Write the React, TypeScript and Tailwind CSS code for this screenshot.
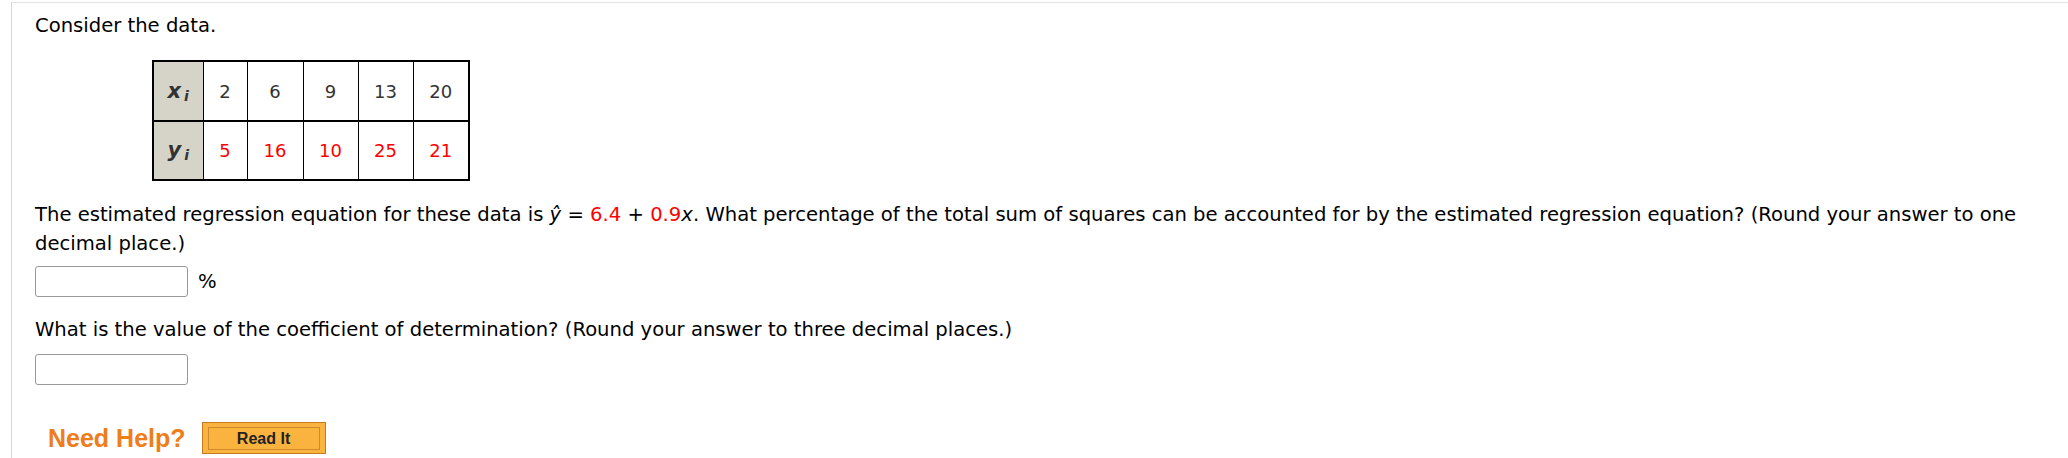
import React from "react";

const xs = [2, 6, 9, 13, 20];
const ys = [5, 16, 10, 25, 21];
const colW = ["w-[44px]", "w-[56px]", "w-[55px]", "w-[55px]", "w-[56px]"];

function AnswerBox() {
  return (
    <div className="w-[153px] h-[31px] border border-[#999] rounded-[3px] bg-white" />
  );
}

export default function App() {
  return (
    <div className="w-[2068px] h-[458px] bg-white overflow-hidden font-['DejaVu_Sans',sans-serif] text-[19.6px] leading-[29px] text-black">
      <div className="mt-[2px] border-t border-[#e3e3e3] ml-[11px] h-[456px] border-l border-l-[#d6d6d6] pl-[23px] pt-[8px]">
        <p>Consider the data.</p>

        <table className="ml-[117px] mt-[20px] border-collapse border-2 border-black text-[18px] text-center">
          <tbody>
            <tr className="h-[60px] border-b-2 border-black">
              <th className="w-[50px] bg-[#d6d3c9] border-r border-black italic font-bold text-[#333] text-[21px]">
                x<sub className="text-[14px] ml-[3px] relative top-[3px]">i</sub>
              </th>
              {xs.map((v, i) => (
                <td key={i} className={`${colW[i]} border-r border-black text-[#333]`}>
                  {v}
                </td>
              ))}
            </tr>
            <tr className="h-[59px]">
              <th className="bg-[#d6d3c9] border-r border-black italic font-bold text-[#333] text-[21px]">
                y<sub className="text-[14px] ml-[3px] relative top-[3px]">i</sub>
              </th>
              {ys.map((v, i) => (
                <td key={i} className="border-r border-black text-[#ff0000]">
                  {v}
                </td>
              ))}
            </tr>
          </tbody>
        </table>

        <p className="mt-[19px] w-[2010px]">
          The estimated regression equation for these data is{" "}
          <span className="italic">ŷ</span> = <span className="text-[#ff0000]">6.4</span> +{" "}
          <span className="text-[#ff0000]">0.9</span>
          <span className="italic">x</span>. What percentage of the total sum of squares can be
          accounted for by the estimated regression equation? (Round your answer to one decimal
          place.)
        </p>

        <div className="mt-[8px] flex items-center gap-[10px]">
          <AnswerBox />
          <span>%</span>
        </div>

        <p className="mt-[18px]">
          What is the value of the coefficient of determination? (Round your answer to three
          decimal places.)
        </p>

        <div className="mt-[10px]">
          <AnswerBox />
        </div>

        <div className="mt-[37px] ml-[13px] flex items-center gap-[16px]">
          <span className="font-['Liberation_Sans',Arial,sans-serif] font-bold text-[25px] text-[#ee7d1a] leading-none">
            Need Help?
          </span>
          <button className="w-[124px] h-[32px] border border-[#c77a1f] bg-[#fbb33f] px-[5px] pt-[4px] pb-[3px]">
            <span className="flex h-full items-center justify-center border border-[#cf8a2f] font-['Liberation_Sans',Arial,sans-serif] font-bold text-[16px] text-[#222] leading-none">
              Read It
            </span>
          </button>
        </div>
      </div>
    </div>
  );
}
